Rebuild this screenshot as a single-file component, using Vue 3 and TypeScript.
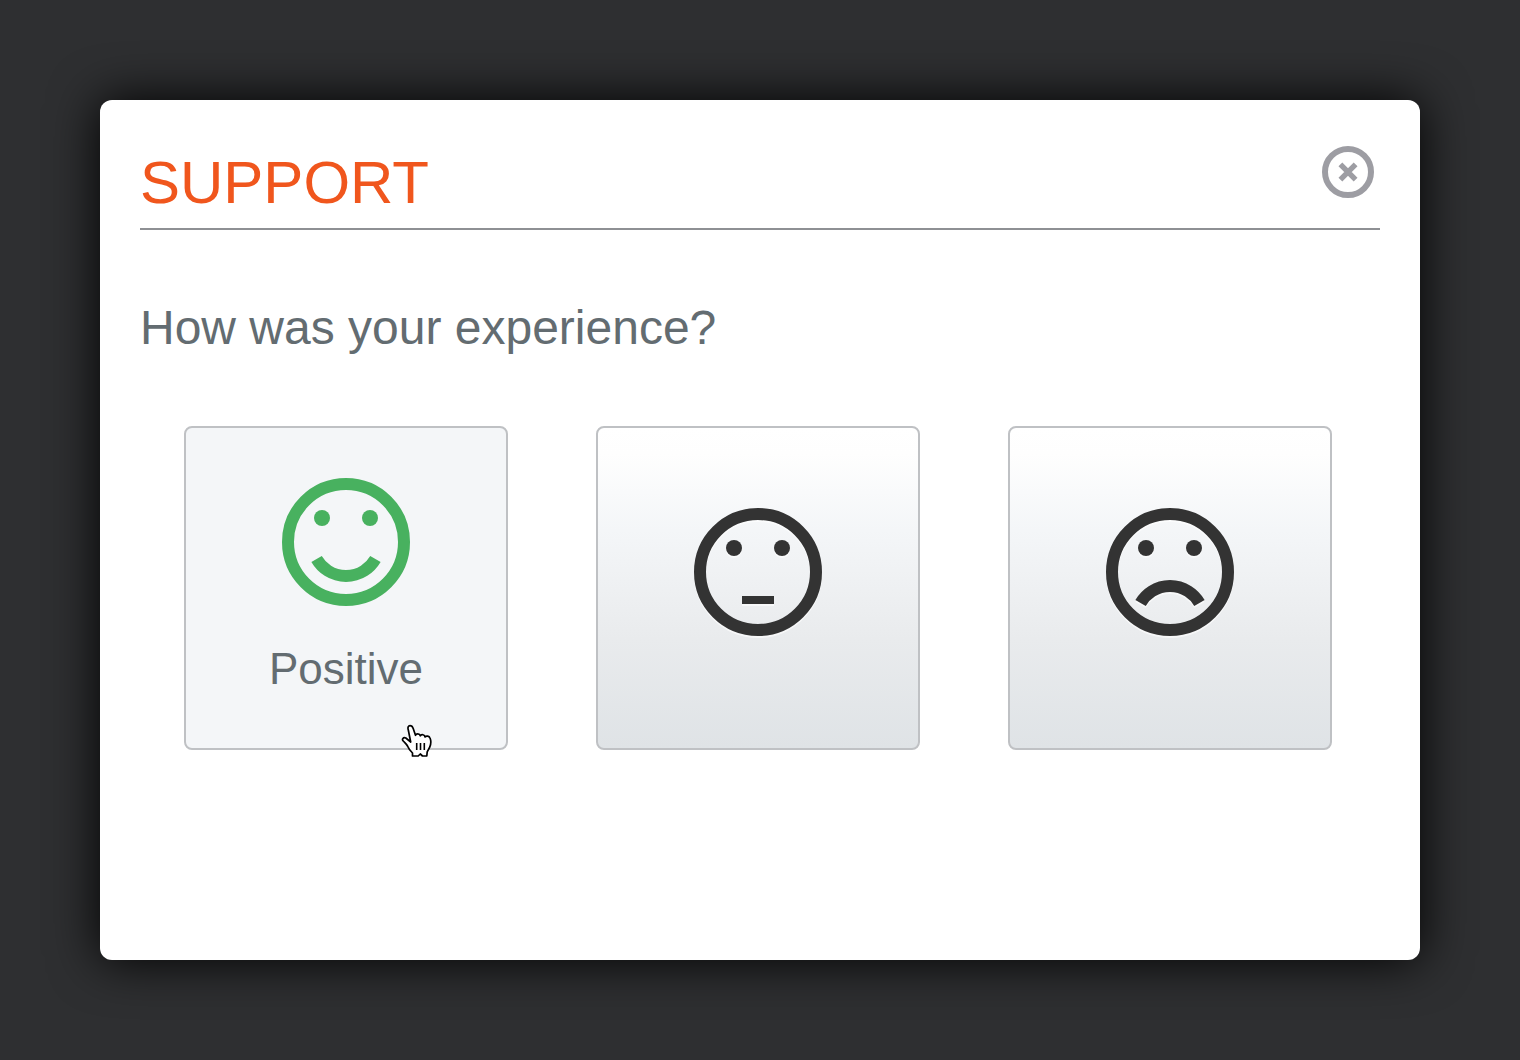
<script setup lang="ts">
import { ref } from 'vue'

interface Mood {
  id: string
  label: string
  mouth: string
  width: number
}

const moods: Mood[] = [
  { id: 'positive', label: 'Positive', mouth: 'M34.56 81A34 34 0 0 0 93.44 81', width: 12 },
  { id: 'neutral', label: 'Neutral', mouth: 'M48 92H80', width: 8 },
  { id: 'negative', label: 'Negative', mouth: 'M34.56 95A34 34 0 0 1 93.44 95', width: 12 },
]

const active = ref('positive')
const open = ref(true)
</script>

<template>
  <div class="backdrop">
    <main v-if="open" class="dialog" role="dialog" aria-labelledby="dialog-title">
      <header class="header">
        <h1 id="dialog-title" class="title">SUPPORT</h1>
        <button class="close" type="button" aria-label="Close" @click="open = false">
          <svg viewBox="0 0 52 52" width="52" height="52" fill="none" stroke="currentColor">
            <circle cx="26" cy="26" r="23" stroke-width="6" />
            <path d="M18.4 18.4L33.6 33.6M33.6 18.400L18.400 33.600" stroke-width="5.400" />
          </svg>
        </button>
      </header>
      <h2 class="question">How was your experience?</h2>
      <div class="moods">
        <button
          v-for="mood in moods"
          :key="mood.id"
          type="button"
          class="mood"
          :class="{ active: active === mood.id }"
          :aria-label="mood.label"
          @mouseenter="active = mood.id"
        >
          <svg class="face" viewBox="0 0 128 128" width="128" height="128">
            <circle cx="64" cy="64" r="58" fill="none" stroke="currentColor" stroke-width="12" />
            <circle cx="40" cy="40" r="8" fill="currentColor" />
            <circle cx="88" cy="40" r="8" fill="currentColor" />
            <path :d="mood.mouth" fill="none" stroke="currentColor" :stroke-width="mood.width" />
          </svg>
          <span v-if="active === mood.id" class="label">{{ mood.label }}</span>
          <svg v-if="active === mood.id" class="pointer" viewBox="0 0 32 34" width="32" height="34" aria-hidden="true">
            <path
              d="M8.300 6C7.500 3.500 8.300 1.700 10 1.700C11.700 1.700 12.600 2.800 13.200 4.500L15.500 11.300C15.800 9.600 19.500 9 20.300 11.800C21.300 9.900 24.700 10.400 25.100 13C26.300 11.400 29.200 12 30 14C31.300 17 30.800 20.500 29.800 23L27.200 27.800L26.800 32H22.500L20.300 30L18.200 32H12.500V29C10.500 27 8.500 24.500 7.500 22C6.500 20 4.500 18.500 3.200 17C1.600 15.200 3.200 12.900 5.800 14L10.700 18Z"
              fill="#fff"
              stroke="#000"
              stroke-width="1.7"
              stroke-linejoin="round"
            />
            <path d="M16.700 19V26M20.500 19V26M24.300 19V26" fill="none" stroke="#000" stroke-width="1.6" />
          </svg>
        </button>
      </div>
    </main>
  </div>
</template>

<style>
body {
  background: #2e2f31;
}
</style>

<style scoped>
.backdrop {
  display: flex;
  box-sizing: border-box;
  min-height: 100vh;
  padding: 100px;
  font-family: 'Liberation Sans', Arial, sans-serif;
}

.dialog {
  flex: 1;
  box-sizing: border-box;
  padding: 40px;
  background: #fff;
  border-radius: 12px;
  box-shadow: 0 0 50px #000;
}

.header {
  display: flex;
  justify-content: space-between;
  align-items: flex-start;
  height: 88px;
  padding-right: 6px;
  border-bottom: 2px solid #8e9094;
}

.title {
  margin: 7px 0 0;
  font-size: 60px;
  line-height: 72px;
  font-weight: 400;
  color: #f0561d;
}

.close {
  margin: 6px 0 0;
  padding: 0;
  border: 0;
  background: none;
  color: #9d9da3;
  cursor: pointer;
}

.close svg,
.face {
  display: block;
}

.question {
  margin: 68px 0 0;
  font-size: 48px;
  line-height: 60px;
  font-weight: 400;
  color: #636c71;
}

.moods {
  display: flex;
  gap: 88px;
  margin-top: 68px;
  padding-left: 44px;
}

.mood {
  position: relative;
  display: flex;
  flex: 0 1 324px;
  flex-direction: column;
  align-items: center;
  box-sizing: border-box;
  height: 324px;
  padding: 80px 0 0;
  border: 2px solid #bfc1c4;
  border-radius: 8px;
  background: linear-gradient(#fff 0%, #fefefe 8%, #f4f6f8 32%, #e9ebed 66%, #dfe3e6 100%);
  color: #333;
  font-family: inherit;
  cursor: pointer;
}

.face {
  filter: drop-shadow(0 2px 0 rgba(255, 255, 255, 0.6));
}

.mood.active {
  padding-top: 50px;
  background: #f4f6f8;
  color: #48b15f;
}

.mood.active .face {
  filter: none;
}

.label {
  margin-top: 37px;
  font-size: 44px;
  line-height: 52px;
  color: #636c71;
}

.pointer {
  position: absolute;
  right: 74px;
  bottom: -10px;
}
</style>
